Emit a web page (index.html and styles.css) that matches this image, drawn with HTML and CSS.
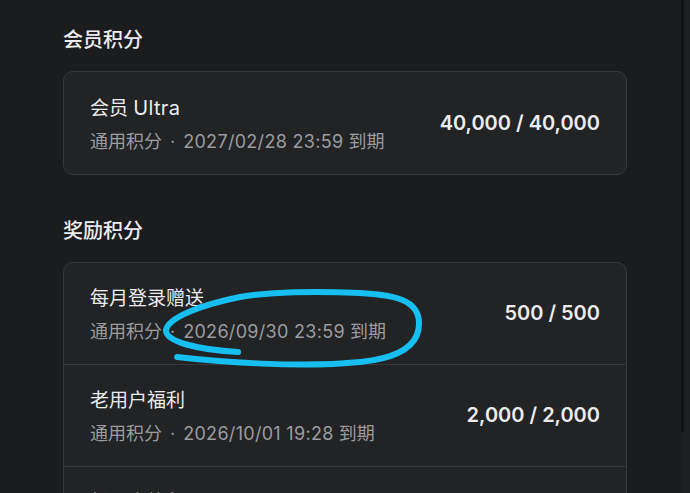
FILE: index.html
```html
<!DOCTYPE html>
<html lang="zh-CN">
<head>
<meta charset="utf-8">
<title>积分</title>
<link rel="stylesheet" href="styles.css">
</head>
<body>
<main class="page">
  <section class="group">
    <h2 class="group-title">会员积分</h2>
    <div class="card">
      <div class="row">
        <div class="info">
          <div class="name">会员 <span class="latin">Ultra</span></div>
          <div class="meta">通用积分<span class="sep">·</span><span class="date">2027/02/28 23:59</span> 到期</div>
        </div>
        <div class="value">40,000 / 40,000</div>
      </div>
    </div>
  </section>

  <section class="group">
    <h2 class="group-title">奖励积分</h2>
    <div class="card">
      <div class="row">
        <div class="info">
          <div class="name">每月登录赠送</div>
          <div class="meta">通用积分<span class="sep">·</span><span class="date">2026/09/30 23:59</span> 到期</div>
        </div>
        <div class="value">500 / 500</div>
      </div>
      <div class="row">
        <div class="info">
          <div class="name">老用户福利</div>
          <div class="meta">通用积分<span class="sep">·</span><span class="date">2026/10/01 19:28</span> 到期</div>
        </div>
        <div class="value">2,000 / 2,000</div>
      </div>
      <div class="row">
        <div class="info">
          <div class="name">新用户礼包</div>
          <div class="meta">通用积分<span class="sep">·</span><span class="date">2026/10/01 19:28</span> 到期</div>
        </div>
        <div class="value">1,000 / 1,000</div>
      </div>
    </div>
  </section>
</main>

<div class="scrollbar"><div class="thumb"></div></div>

<svg class="annotation" width="690" height="493" viewBox="0 0 690 493" aria-hidden="true">
  <path d="M177 357 C220 362 300 368 360 362 C400 358 420 345 419 322 C418 300 395 295 360 293 C310 291 270 292 240 297 C200 305 168 318 166 330 C165 342 200 350 238 352"
        fill="none" stroke="#17bef0" stroke-width="6" stroke-linecap="round" stroke-linejoin="round"/>
</svg>
</body>
</html>
```

FILE: styles.css
```css
html, body {
  margin: 0;
  padding: 0;
  background: #1b1c1e;
  height: 100%;
  overflow: hidden;
}

body {
  font-family: "Inter", "Noto Sans CJK SC", "Noto Sans", sans-serif;
  color: #e8e8ea;
}

.page {
  width: 564px;
  padding: 25px 0 0 63px;
  display: flex;
  flex-direction: column;
  gap: 41px;
}

.group {
  display: flex;
  flex-direction: column;
  gap: 16px;
}

.group-title {
  margin: 0;
  font-size: 20px;
  line-height: 30px;
  font-weight: 500;
  color: #ececee;
}

.card {
  background: #222325;
  border: 1px solid #37383b;
  border-radius: 10px;
  overflow: hidden;
}

.row {
  display: flex;
  align-items: center;
  justify-content: space-between;
  padding: 23px 26px 19px 26px;
  border-top: 1px solid #37383b;
}

.row:first-child {
  border-top: none;
}

.info {
  display: flex;
  flex-direction: column;
  gap: 7px;
}

.name {
  font-size: 19px;
  line-height: 26px;
  color: #ececee;
}

.latin {
  font-size: 20px;
  letter-spacing: 0.3px;
}

.meta {
  font-size: 18px;
  line-height: 26px;
  color: #9b9c9f;
}

.sep {
  display: inline-block;
  margin: 0 8px 0 8px;
}

.date {
  letter-spacing: 0.3px;
}

.value {
  font-size: 20px;
  line-height: 28px;
  font-weight: 600;
  color: #ececee;
  padding-bottom: 5px;
}

.scrollbar {
  position: fixed;
  top: 0;
  right: 0;
  width: 9px;
  height: 100%;
  background: #1e1f21;
}

.thumb {
  width: 3px;
  height: 432px;
  background: #111214;
}

.annotation {
  position: fixed;
  left: 0;
  top: 0;
  pointer-events: none;
}
```
